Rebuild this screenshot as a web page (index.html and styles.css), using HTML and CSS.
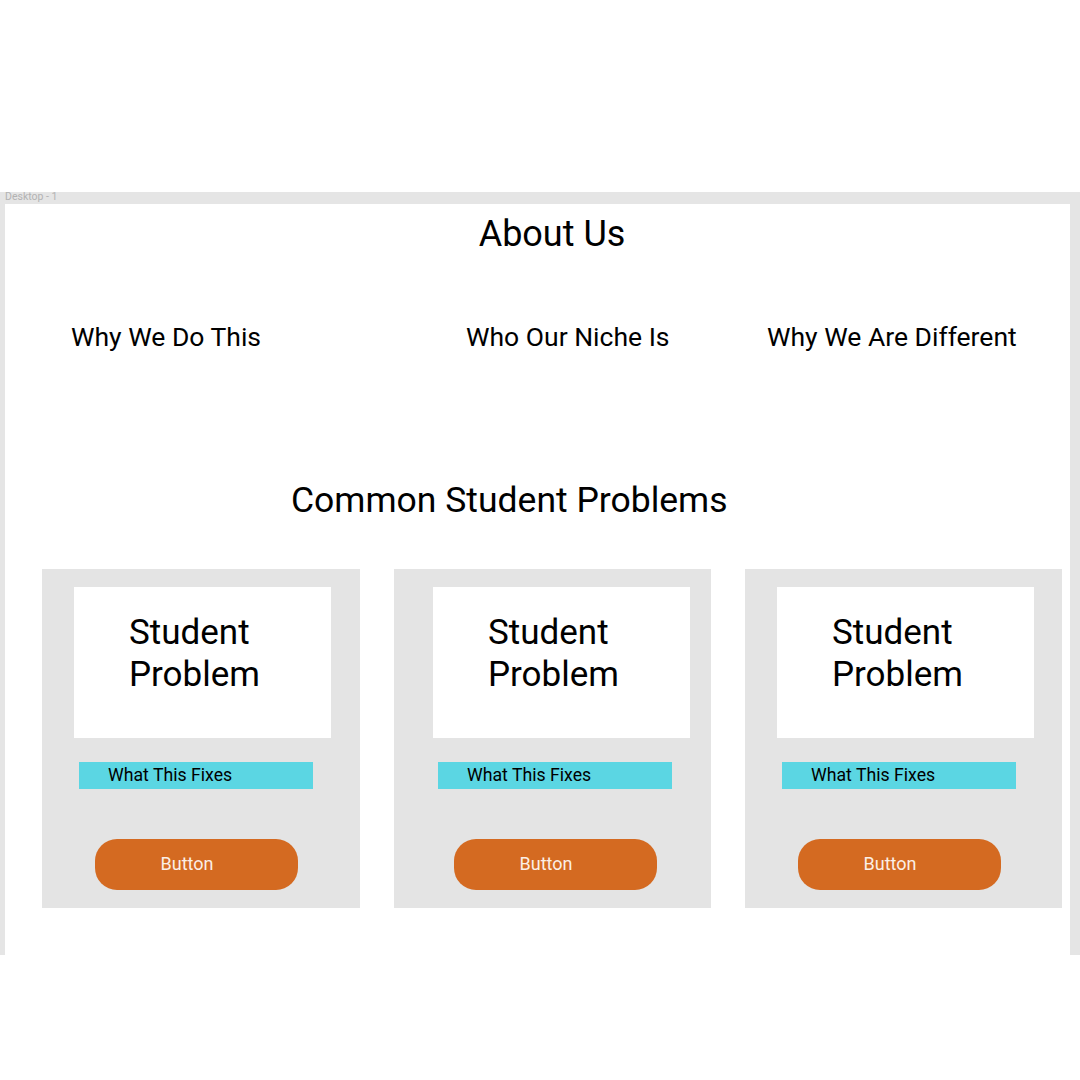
FILE: index.html
```html
<!DOCTYPE html>
<html lang="en">
<head>
  <meta charset="UTF-8" />
  <meta name="viewport" content="width=device-width, initial-scale=1.0" />
  <title>Desktop - 1</title>
  <link rel="stylesheet" href="styles.css">
</head>
<body>
  <div class="canvas">
    <div class="frame">
      <div class="frame-label">Desktop - 1</div>
      <div class="desktop">
        <h1 class="title">About Us</h1>

        <nav class="topics">
          <span>Why We Do This</span>
          <span>Who Our Niche Is</span>
          <span>Why We Are Different</span>
        </nav>

        <h2 class="section-title">Common Student Problems</h2>

        <div class="cards">
          <div class="card">
            <div class="problem">Student<br>Problem</div>
            <div class="fixes">What This Fixes</div>
            <button class="btn">Button</button>
          </div>
          <div class="card card-mid">
            <div class="problem">Student<br>Problem</div>
            <div class="fixes">What This Fixes</div>
            <button class="btn">Button</button>
          </div>
          <div class="card">
            <div class="problem">Student<br>Problem</div>
            <div class="fixes">What This Fixes</div>
            <button class="btn">Button</button>
          </div>
        </div>
      </div>
    </div>
  </div>
</body>
</html>
```

FILE: styles.css
```css
body {
  font-family: Roboto, 'Liberation Sans', sans-serif;
  background-color: white;
  color: #000;
  margin: 0;
  padding: 0;
}
.canvas {
  padding-top: 192px;
}
.frame {
  background-color: #e5e5e5;
  padding: 0 10px 0 5px;
  height: 763px;
}
.frame-label {
  height: 12px;
  line-height: 10px;
  font-size: 10.5px;
  color: #b3b3b3;
}
.desktop {
  background-color: white;
  height: 751px;
}
.title {
  margin: 0;
  padding: 10px 0 0 29px;
  font-size: 36px;
  font-weight: 400;
  line-height: 40px;
  text-align: center;
}
.topics {
  display: grid;
  grid-template-columns: 395px 301px 1fr;
  padding-left: 66px;
  margin-top: 68px;
  font-size: 26.5px;
  line-height: 30px;
}
.section-title {
  margin: 128px 0 0;
  padding-left: 286px;
  font-size: 35.5px;
  font-weight: 400;
  line-height: 40px;
}
.cards {
  display: grid;
  grid-template-columns: 318px 317px 317px;
  column-gap: 34px;
  padding-left: 37px;
  margin-top: 49px;
}
.card {
  background-color: #e4e4e4;
  padding: 18px 0 18px 32px;
}
.card-mid {
  padding-left: 39px;
}
.problem {
  width: 257px;
  height: 151px;
  box-sizing: border-box;
  background-color: white;
  padding: 25px 0 0 55px;
  font-size: 35px;
  line-height: 42px;
}
.fixes {
  width: 234px;
  height: 27px;
  box-sizing: border-box;
  margin: 24px 0 0 5px;
  padding-left: 29px;
  background-color: #5bd6e3;
  font-size: 17.7px;
  line-height: 27px;
}
.btn {
  display: block;
  width: 203px;
  height: 51px;
  margin: 50px 0 0 21px;
  padding: 0 19px 2px 0;
  border: none;
  border-radius: 22px;
  background-color: #d46a21;
  color: #fbefe6;
  font-family: inherit;
  font-size: 18px;
}
```
